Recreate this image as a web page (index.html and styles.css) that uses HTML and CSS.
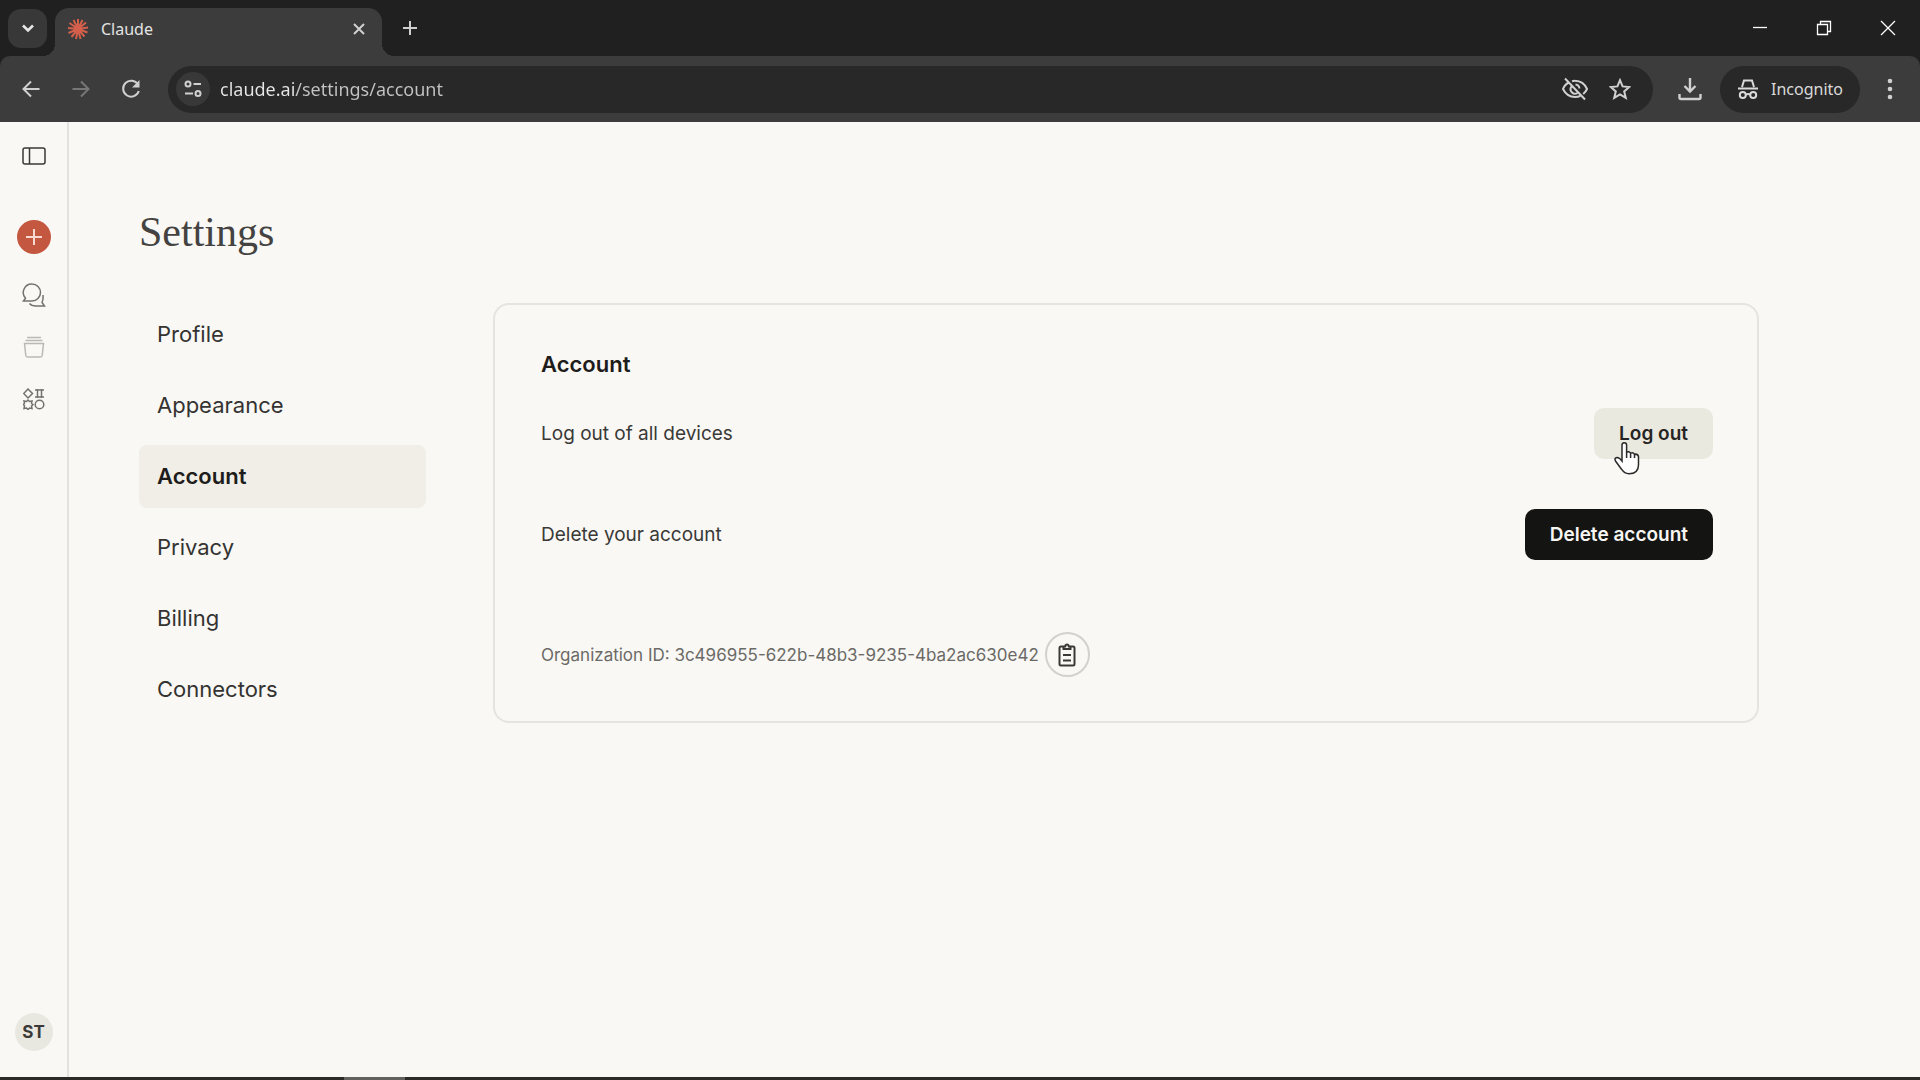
FILE: index.html
```html
<!DOCTYPE html>
<html lang="en">
<head>
<meta charset="utf-8">
<title>Claude</title>
<link rel="stylesheet" href="styles.css">
</head>
<body>
<header class="browser">
  <div class="tabstrip">
    <button class="tab-search" aria-label="Search tabs"><svg width="16" height="16" viewBox="0 0 16 16"><path d="M3 5.500l5 5 5-5" stroke-width="2.600"/></svg></button>
    <div class="tab">
      <svg class="burst" width="22" height="22" viewBox="0 0 22 22"><path d="M11 11V1M11 11l4.500-9M11 11l8-6.500M11 11l10-1.500M11 11l9.500 3.500M11 11l6.500 7.500M11 11l2.500 10M11 11l-2 10M11 11l-6.500 8M11 11l-9.500 4M11 11L1 10M11 11L2.500 5M11 11L6.500 2"/></svg>
      <span class="tab-title">Claude</span>
      <button class="plain" aria-label="Close tab"><svg width="14" height="14" viewBox="0 0 14 14"><path d="M2 2l10 10M12 2L2 12" stroke-width="2"/></svg></button>
    </div>
    <button class="plain new-tab" aria-label="New tab"><svg width="16" height="16" viewBox="0 0 16 16"><path d="M8 1v14M1 8h14" stroke-width="2"/></svg></button>
    <div class="window-controls">
      <button class="win" aria-label="Minimize"><svg width="16" height="16" viewBox="0 0 16 16"><path d="M1 7.500h14"/></svg></button>
      <button class="win" aria-label="Restore"><svg width="16" height="16" viewBox="0 0 16 16"><path d="M1.500 4.500h10v10h-10zM4.500 4.500v-3h10v10h-3"/></svg></button>
      <button class="win" aria-label="Close"><svg width="16" height="16" viewBox="0 0 16 16"><path d="M1 1l14 14M15 1L1 15"/></svg></button>
    </div>
  </div>
  <div class="toolbar">
    <button class="tool" aria-label="Back"><svg width="20" height="20" viewBox="0 0 20 20"><path d="M18.500 10H3M10 2.500L2.500 10l7.500 7.500"/></svg></button>
    <button class="tool dim" aria-label="Forward"><svg width="20" height="20" viewBox="0 0 20 20"><path d="M1.500 10H17M10 2.500l7.500 7.500-7.500 7.500"/></svg></button>
    <button class="tool" aria-label="Reload"><svg width="20" height="20" viewBox="0 0 20 20"><path d="M17 5.500A8 8 0 1 0 17.800 12"/><path d="M18.500 1v7.500H11z" class="solid"/></svg></button>
    <div class="omnibox">
      <button class="site-info" aria-label="View site information"><svg width="20" height="20" viewBox="0 0 20 20"><circle cx="5" cy="5" r="2.500"/><circle cx="15" cy="14.500" r="2.500"/><path d="M10.500 5H18M2 14.500h8"/></svg></button>
      <input class="url" type="text" aria-label="Address" value="claude.ai/settings/account">
      <button class="plain" aria-label="Third-party cookies blocked"><svg width="28" height="24" viewBox="0 0 28 24"><path d="M8 5.200Q3.500 8 2 12q4 8 12 8 3 0 5.200-1M11 4.200Q13 3.700 14 3.800q8.500.2 12 8.200-1.300 3-3.800 5M10.500 9.500a4.500 4.500 0 0 0 6 6.500M14.500 7.500a4.500 4.500 0 0 1 4 4M4 1.500l20 21"/></svg></button>
      <button class="plain" aria-label="Bookmark this tab"><svg width="22" height="22" viewBox="0 0 22 22"><path d="M11 2.200l2.600 6.200 6.700.6-5.100 4.400 1.600 6.500-5.800-3.500-5.800 3.500 1.600-6.500L1.700 9l6.700-.6z"/></svg></button>
    </div>
    <button class="tool" aria-label="Downloads"><svg width="24" height="24" viewBox="0 0 24 24"><path d="M12 1v13M6.500 9l5.500 5.500L17.500 9M1.500 17v3.500q0 1.500 1.500 1.500h18q1.500 0 1.500-1.500V17" stroke-width="2.400"/></svg></button>
    <button class="incognito"><svg width="22" height="22" viewBox="0 0 22 22"><path d="M5 9l2-6.500h8L17 9M1 10.500h20M9 16.500q2-1 4 0"/><circle cx="5.800" cy="17" r="3"/><circle cx="16.200" cy="17" r="3"/></svg><span>Incognito</span></button>
    <button class="tool" aria-label="Menu"><svg width="6" height="22" viewBox="0 0 6 22"><g class="solid"><circle cx="3" cy="3" r="2.300"/><circle cx="3" cy="11" r="2.300"/><circle cx="3" cy="19" r="2.300"/></g></svg></button>
  </div>
</header>
<div class="app">
  <aside class="rail">
    <button class="rail-button toggle" aria-label="Open sidebar"><svg width="24" height="18" viewBox="0 0 24 18"><rect x="1" y="1" width="22" height="16" rx="2"/><path d="M7.500 1v16"/></svg></button>
    <button class="new-chat" aria-label="New chat"><svg width="16" height="16" viewBox="0 0 16 16"><path d="M8 0v16M0 8h16"/></svg></button>
    <button class="rail-button mid" aria-label="Chats"><svg width="24" height="24" viewBox="0 0 24 24"><path d="M10 1a8.500 8.500 0 0 1 0 17H1.500l2-2.800A8.500 8.500 0 0 1 10 1zM21 12q.4 5-1 7.500l2.500 3.500H14q-4.500 0-6.500-2.500"/></svg></button>
    <button class="rail-button faint" aria-label="Projects"><svg width="22" height="22" viewBox="0 0 22 22"><path d="M4 1.500h14M2.500 4.500h17M1.500 7.500h19l-1.300 12q-.2 1.500-1.700 1.500h-13q-1.500 0-1.700-1.500z"/></svg></button>
    <button class="rail-button mid" aria-label="Artifacts"><svg width="22" height="22" viewBox="0 0 22 22"><path d="M5 1l4.500 4.500L5 10 .700 5.500zM12 2h9M12 9h9M14.500 1v9M18.500 1v9"/><path d="M5 12l1.500 1.500 2.500-.5-.5 2.500L10 16.500 8.500 18l.5 2.500-2.500-.5L5 21.500 3.500 20 1 20.500 1.500 18 .500 16.500 1.500 15 1 13l2.500.5z"/><circle cx="16.500" cy="16.500" r="4.300"/></svg></button>
    <button class="avatar">ST</button>
  </aside>
  <main class="settings">
    <h1>Settings</h1>
    <div class="columns">
      <nav class="sections">
        <a href="#profile">Profile</a>
        <a href="#appearance">Appearance</a>
        <a href="#account" class="current">Account</a>
        <a href="#privacy">Privacy</a>
        <a href="#billing">Billing</a>
        <a href="#connectors">Connectors</a>
      </nav>
      <section class="card">
        <h2>Account</h2>
        <div class="row"><span>Log out of all devices</span>
          <button class="action soft">Log out<svg class="pointer" width="26" height="34" viewBox="0 0 26 34"><path d="M8 20V4a2.300 2.300 0 0 1 4.600 0v7.500q2-1.800 4 .7 2.500-1.300 3.700 1 3.700-.5 4.200 2.500v8q0 9-9.500 9-4.500 0-7.500-4.500L1.500 20q-1.500-3 1.500-3.500 2.500 0 5 3.500zM12.600 11.500V17M16.600 12.200V17M20.500 13.200V17"/></svg></button></div>
        <div class="row"><span>Delete your account</span><button class="action dark">Delete account</button></div>
        <div class="organization"><span>Organization ID: 3c496955-622b-48b3-9235-4ba2ac630e42</span>
          <button class="copy" aria-label="Copy organization ID"><svg width="18" height="24" viewBox="0 0 18 24"><path d="M5 3.500H3q-1.500 0-1.500 1.500v16q0 1.500 1.500 1.500h12q1.500 0 1.500-1.500V5q0-1.500-1.500-1.500h-2M5.500 6V3.500h1.700q.3-2 1.800-2t1.800 2h1.700V6zM5 12h8M5 17.500h8"/></svg></button></div>
      </section>
    </div>
  </main>
</div>
<footer class="screen-edge"></footer>
</body>
</html>
```
FILE: styles.css
```css
* { box-sizing: border-box; }
body {
  margin: 0;
  min-height: 100vh;
  display: flex;
  flex-direction: column;
  background: #f9f8f4;
  color: #3a3937;
  font-family: Inter, sans-serif;
}
button, input { font: inherit; color: inherit; border: 0; padding: 0; background: none; }
button { display: flex; align-items: center; justify-content: center; flex: none; }
svg { display: block; flex: none; fill: none; stroke: currentColor; stroke-width: 2; }
.solid { fill: currentColor; stroke: none; }

.browser { background: #202020; color: #d0d0d0; font-family: "Noto Sans", sans-serif; }
.tabstrip { display: flex; align-items: center; height: 56px; padding-left: 8px; }
.tab-search { width: 39px; height: 39px; border-radius: 13px; background: #383838; color: #e6e6e6; }
.tab {
  position: relative;
  display: flex;
  align-items: center;
  align-self: flex-end;
  gap: 12px;
  width: 327px;
  height: 48px;
  margin-left: 8px;
  padding: 0 16px 6px 12px;
  border-radius: 14px 14px 0 0;
  background: #3c3c3c;
}
.tab::before, .tab::after { content: ""; position: absolute; bottom: 0; width: 12px; height: 12px; }
.tab::before { right: 100%; background: radial-gradient(circle at 0 0, transparent 12px, #3c3c3c 12px); }
.tab::after { left: 100%; background: radial-gradient(circle at 100% 0, transparent 12px, #3c3c3c 12px); }
.burst { color: #d4604c; stroke-width: 2; }
.tab-title { flex: 1; font-size: 16px; line-height: 24px; color: #e3e3e3; }
.new-tab { margin-left: 20px; }
.window-controls { display: flex; margin-left: auto; color: #fff; }
.win { width: 64px; height: 56px; }
.win svg { stroke-width: 1.300; }
.toolbar {
  display: flex;
  align-items: center;
  gap: 10px;
  height: 66px;
  padding: 0 10px 0 11px;
  border-radius: 10px 10px 0 0;
  background: #3c3c3c;
}
.tool { width: 40px; height: 40px; }
.dim { color: #777; }
.omnibox {
  display: flex;
  flex: 1;
  align-items: center;
  gap: 20px;
  height: 47px;
  margin: 0 7px;
  padding: 0 22px 0 8px;
  border-radius: 24px;
  background: #282828;
}
.site-info { width: 34px; height: 34px; border-radius: 50%; background: #383838; }
.url {
  flex: 1;
  min-width: 0;
  margin-left: -10px;
  padding: 0;
  font-size: 18px;
  line-height: 28px;
  color: transparent;
  background: linear-gradient(90deg, #e8e8e8 76px, #c4c4c4 76px);
  background-clip: text;
}
.incognito {
  gap: 12px;
  height: 47px;
  padding: 0 17px;
  border-radius: 24px;
  background: #282828;
  font-size: 16px;
  color: #dadada;
}

.app { display: flex; flex: 1; }
.rail {
  display: flex;
  flex: none;
  flex-direction: column;
  align-items: center;
  width: 69px;
  padding: 14px 0 26px 0;
  border-right: 2px solid #e3e2de;
}
.rail-button { width: 40px; height: 40px; margin-bottom: 12px; }
.rail-button svg { stroke-width: 1.500; }
.toggle { margin-bottom: 44px; }
.mid { color: #73726e; }
.faint { color: #bab9b5; }
.new-chat { width: 34px; height: 34px; margin-bottom: 21px; border-radius: 50%; background: #c4573f; color: #f6d9d0; }
.avatar { width: 38px; height: 38px; margin-top: auto; border-radius: 50%; background: #e9e8e0; font-size: 17px; font-weight: 700; }

.settings { flex: 1; min-width: 0; padding: 86px 161px 40px 70px; }
h1 { margin: 0 0 47px; font: 400 42px/48px "Liberation Serif", serif; color: #444341; }
.columns { display: grid; grid-template-columns: 287px 1fr; gap: 67px; align-items: start; }
.sections { display: flex; flex-direction: column; gap: 8px; }
.sections a {
  padding: 16px 18px;
  border-radius: 8px;
  font-size: 22px;
  line-height: 31px;
  color: #343331;
  text-decoration: none;
}
.sections .current { background: #f0eee6; color: #1e1d1b; font-weight: 600; }
.card { padding: 44px 44px 44px 46px; border: 2px solid #e5e4df; border-radius: 16px; }
h2 { margin: 0 0 29px; font-size: 22px; line-height: 30px; font-weight: 600; color: #1e1d1b; }
.row { display: flex; align-items: center; justify-content: space-between; height: 51px; margin-bottom: 50px; font-size: 19px; }
.action { position: relative; height: 51px; border-radius: 10px; font-weight: 600; }
.soft { padding: 0 25px; background: #eae9e0; color: #262523; }
.dark { padding: 0 25px; background: #141412; color: #f7f6f2; }
.pointer { position: absolute; left: 20px; top: 33px; fill: #fff; stroke: #2a2a2a; stroke-width: 1.500; }
.organization { display: flex; align-items: center; gap: 6px; margin-top: 72px; font-size: 17px; color: #6b6a66; }
.copy { width: 45px; height: 45px; border: 2px solid #d2d1cd; border-radius: 50%; color: #3a3937; }
.screen-edge { height: 3px; background: linear-gradient(90deg, #2b2a26 344px, #62615d 344px 405px, #2b2a26 405px); }
```
